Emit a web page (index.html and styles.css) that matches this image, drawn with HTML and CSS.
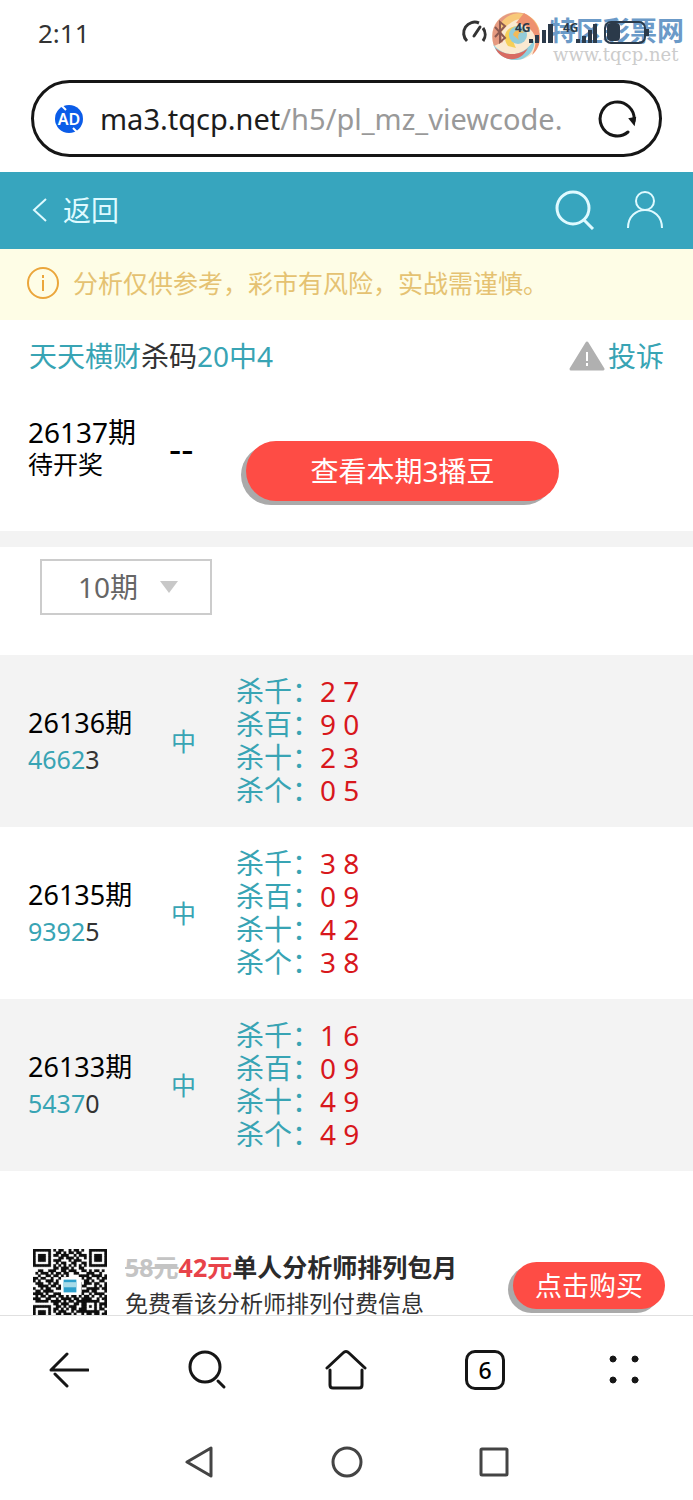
FILE: index.html
```html
<!DOCTYPE html>
<html lang="zh-CN">
<head>
	<meta charset="utf-8">
	<meta name="viewport" content="width=device-width, initial-scale=1">
	<title>天天横财杀码</title>
	<link rel="stylesheet" href="styles.css">
</head>
<body>

<div class="status">
	<span>2:11</span>
	<svg class="status-icons" width="192" height="30" viewBox="0 0 192 30">
		<g fill="none" stroke="#333" stroke-width="3">
			<path d="M6 23 A11 11 0 0 1 18 5 M22 10 A11 11 0 0 1 22 23"/>
			<path d="M13 18 L19 9" stroke-linecap="round"/>
			<path d="M34 9 L44 20 L39 24 V4 L44 8 L34 19" stroke="#8d5a50" stroke-width="2"/>
		</g>
		<g fill="#2b3a4a">
			<path d="M68 21h4v4h-4z M74 17h4v8h-4z M81 12h4v13h-4z M87 6h5v19h-5z"/>
			<path d="M115 21h4v4h-4z M121 18h4v7h-4z M127 12h4v13h-4z M132 6h4v19h-4z"/>
			<text x="54" y="14">4G</text>
			<text x="102" y="14">4G</text>
			<rect x="146" y="5" width="13" height="18" rx="4"/>
			<rect x="185" y="11" width="3" height="7"/>
		</g>
		<rect x="144" y="4" width="40" height="21" rx="6" fill="none" stroke="#2b3a4a" stroke-width="2"/>
	</svg>
	<div class="watermark">
		<svg width="52" height="54" viewBox="0 0 52 54">
			<circle cx="26" cy="26" r="24" fill="#fae9d0"/>
			<path d="M4 36 C-4 12 18 -4 38 5 C20 2 8 14 13 32 Z" fill="#e59a80"/>
			<path d="M10 14 C22 -4 46 2 50 22 C40 4 24 4 10 24 Z" fill="#f8c979"/>
			<path d="M34 3 C52 12 55 34 42 45 C50 28 44 16 26 13 Z" fill="#ee9270"/>
			<path d="M3 34 C16 50 34 46 44 30 C46 42 34 51 24 50 C12 49 6 42 3 34 Z" fill="#8fd0df"/>
			<path d="M5 38 C18 48 32 44 38 38 C30 54 12 52 5 38 Z" fill="#d86b62"/>
			<path d="M18 36 C8 22 24 10 36 20 C24 18 20 28 26 38 Z" fill="#f6cf58"/>
			<circle cx="28" cy="25" r="9" fill="#93ccd9"/>
			<path d="M23 25 A6 6 0 0 1 34 23 C29 21 27 25 29 30 Z" fill="#f3ba59"/>
		</svg>
		<div>
			<b>特区彩票网</b>
			<small>www.tqcp.net</small>
		</div>
	</div>
</div>

<div class="address">
	<svg width="28" height="28" viewBox="0 0 28 28">
		<circle cx="14" cy="14" r="14" fill="#0b5ce8"/>
		<path d="M7 1 L11 5 M18 23 L22 27" stroke="#fff" stroke-width="2"/>
		<text x="14" y="20" text-anchor="middle">AD</text>
	</svg>
	<span class="url">ma3.tqcp.net<i>/h5/pl_mz_viewcode.</i></span>
	<button type="button" aria-label="刷新">
		<svg width="40" height="40" viewBox="0 0 40 40" fill="none" stroke="#161616" stroke-width="2">
			<path d="M31 33 A17 17 0 1 1 37 22" stroke-width="3" stroke-linecap="round"/>
			<path d="M33 20 L37 25 L38 19 Z" fill="#161616"/>
		</svg>
	</button>
</div>

<main>
	<header class="topbar">
		<a class="back" href="#">
			<svg width="16" height="26" viewBox="0 0 16 26" fill="none" stroke="#dffaff" stroke-width="2">
				<path d="M14 2 L2 13 L14 24"/>
			</svg>
			返回
		</a>
		<a href="#" aria-label="搜索">
			<svg width="40" height="40" viewBox="0 0 40 40" fill="none" stroke="#dffaff" stroke-width="3">
				<circle cx="18" cy="18" r="16"/>
				<path d="M29 30 L38 39"/>
			</svg>
		</a>
		<a href="#" aria-label="我的">
			<svg width="38" height="40" viewBox="0 0 38 40" fill="none" stroke="#dffaff" stroke-width="2">
				<circle cx="19" cy="11" r="9"/>
				<path d="M2 38 C2 14 36 14 36 38"/>
			</svg>
		</a>
	</header>

	<div class="notice">
		<svg width="32" height="32" viewBox="0 0 32 32" fill="none" stroke="#eba63c" stroke-width="2">
			<circle cx="16" cy="16" r="15"/>
			<path d="M16 13 V24 M16 8 V11"/>
		</svg>
		分析仅供参考，彩市有风险，实战需谨慎。
	</div>

	<div class="title">
		<h1><em>天天横财</em>杀码<em>20中4</em></h1>
		<a href="#">
			<svg width="36" height="30" viewBox="0 0 36 30">
				<path d="M18 2 L34 28 H2 Z" fill="#b0b0b0" stroke="#b0b0b0" stroke-width="3" stroke-linejoin="round"/>
				<path d="M18 11 V20 M18 22 V25" stroke="#fff" stroke-width="2"/>
			</svg>
			投诉
		</a>
	</div>

	<section class="current">
		<div class="period">26137期<small>待开奖</small></div>
		<span class="dash">--</span>
		<button type="button" class="pill">查看本期3播豆</button>
	</section>

	<div class="filter">
		<div class="select">
			<select aria-label="期数">
				<option>10期</option>
				<option>20期</option>
				<option>30期</option>
			</select>
			<svg width="18" height="12" viewBox="0 0 18 12"><path d="M0 0 H18 L9 12 Z" fill="#c8c8c8"/></svg>
		</div>
	</div>

	<table class="list">
		<tr>
			<td class="no">26136期<span><em>4662</em>3</span></td>
			<td class="hit">中</td>
			<td><ul>
				<li>杀千：<b>2 7</b></li>
				<li>杀百：<b>9 0</b></li>
				<li>杀十：<b>2 3</b></li>
				<li>杀个：<b>0 5</b></li>
			</ul></td>
		</tr>
		<tr>
			<td class="no">26135期<span><em>9392</em>5</span></td>
			<td class="hit">中</td>
			<td><ul>
				<li>杀千：<b>3 8</b></li>
				<li>杀百：<b>0 9</b></li>
				<li>杀十：<b>4 2</b></li>
				<li>杀个：<b>3 8</b></li>
			</ul></td>
		</tr>
		<tr>
			<td class="no">26133期<span><em>5437</em>0</span></td>
			<td class="hit">中</td>
			<td><ul>
				<li>杀千：<b>1 6</b></li>
				<li>杀百：<b>0 9</b></li>
				<li>杀十：<b>4 9</b></li>
				<li>杀个：<b>4 9</b></li>
			</ul></td>
		</tr>
	</table>

	<section class="promo">
		<svg id="qr" width="74" height="74" viewBox="0 0 29 29"></svg>
		<div class="promo-text">
			<h2><del>58元</del><ins>42元</ins>单人分析师排列包月</h2>
			<p>免费看该分析师排列付费信息</p>
		</div>
		<button type="button" class="pill buy">点击购买</button>
	</section>
</main>

<footer>
	<nav class="tools">
		<button type="button" aria-label="后退">
			<svg width="40" height="40" viewBox="0 0 40 40">
				<path d="M39 20 H2 L18 4 M6 24 L18 36"/>
			</svg>
		</button>
		<button type="button" aria-label="搜索">
			<svg width="40" height="40" viewBox="0 0 40 40">
				<circle cx="17" cy="17" r="15"/>
				<path d="M30 31 L36 37"/>
			</svg>
		</button>
		<button type="button" aria-label="主页">
			<svg width="42" height="40" viewBox="0 0 42 40">
				<path d="M2 18 L18 3 Q21 0 24 3 L40 18 M5 20 V35 Q5 38 8 38 H34 Q37 38 37 35 V20"/>
			</svg>
		</button>
		<button type="button" aria-label="标签页"><span class="tabs">6</span></button>
		<button type="button" aria-label="菜单">
			<svg class="dots" width="32" height="30" viewBox="0 0 32 30">
				<circle cx="5" cy="4" r="3"/><circle cx="27" cy="4" r="3"/>
				<circle cx="5" cy="25" r="3"/><circle cx="27" cy="25" r="3"/>
			</svg>
		</button>
	</nav>
	<nav class="system">
		<button type="button" aria-label="返回">
			<svg width="32" height="32" viewBox="0 0 32 32"><path d="M27 2 V30 L3 16 Z"/></svg>
		</button>
		<button type="button" aria-label="桌面">
			<svg width="32" height="32" viewBox="0 0 32 32"><circle cx="16" cy="16" r="14"/></svg>
		</button>
		<button type="button" aria-label="多任务">
			<svg width="32" height="32" viewBox="0 0 32 32"><rect x="3" y="3" width="26" height="26" rx="1"/></svg>
		</button>
	</nav>
</footer>

<script src="qr.js"></script>
</body>
</html>
```
FILE: styles.css
```css
* {
	box-sizing: border-box;
}

body {
	display: flex;
	flex-direction: column;
	height: 100vh;
	margin: 0;
	background: #fff;
	color: #000;
	font: 28px/32px "Noto Sans", "Noto Sans CJK SC", sans-serif;
}

a {
	color: #38a4b4;
	text-decoration: none;
}

button {
	padding: 0;
	border: 0;
	background: none;
	color: inherit;
	font: inherit;
}

svg {
	display: block;
	flex: none;
}

em, i {
	font-style: normal;
}

em {
	color: #38a4b4;
}

/* phone status bar */
.status {
	position: relative;
	display: flex;
	flex: none;
	align-items: center;
	justify-content: space-between;
	height: 68px;
	padding: 0 40px 2px 38px;
	color: #333;
	font-size: 26px;
}

.status-icons {
	position: relative;
	z-index: 1;
}

.status-icons text {
	font-size: 12px;
	font-weight: bold;
}

.watermark {
	position: absolute;
	top: 10px;
	right: 9px;
	display: flex;
	gap: 7px;
}

.watermark b {
	display: block;
	margin-top: 4px;
	color: #6b9ac8;
	font-size: 27px;
	line-height: 34px;
}

.watermark small {
	display: block;
	padding-left: 4px;
	color: #ccc;
	font: 18px/14px "DejaVu Serif", serif;
}

.address {
	display: flex;
	flex: none;
	align-items: center;
	height: 77px;
	margin: 12px 31px 15px;
	padding: 0 22px 0 21px;
	border: 3px solid #161616;
	border-radius: 39px;
}

.address text {
	fill: #fff;
	font-size: 16px;
	font-weight: 600;
}

.url {
	flex: 1;
	margin-left: 17px;
	overflow: hidden;
	font-size: 29px;
	line-height: 40px;
	white-space: nowrap;
	color: #1c1c1c;
}

.url i {
	color: #999;
}

main {
	flex: 1;
	min-height: 0;
	overflow: hidden;
}

.topbar {
	display: flex;
	align-items: center;
	gap: 31px;
	height: 77px;
	padding: 0 29px 2px 32px;
	background: #37a5be;
}

.back {
	display: flex;
	flex: 1;
	align-items: center;
	gap: 15px;
	color: #dffaff;
}

.notice {
	display: flex;
	align-items: center;
	gap: 14px;
	height: 71px;
	padding: 0 27px 4px;
	background: #fefde6;
	color: #e5c272;
	font-size: 25px;
}

.title {
	display: flex;
	align-items: center;
	justify-content: space-between;
	height: 72px;
	padding: 0 29px;
}

.title h1 {
	margin: 0;
	font-size: 28px;
	font-weight: normal;
	color: #333;
}

.title a {
	display: flex;
	align-items: center;
	gap: 3px;
}

.current {
	display: flex;
	align-items: flex-start;
	padding: 24px 28px 30px;
	border-bottom: 16px solid #f3f3f3;
}

.period {
	width: 141px;
}

.period small {
	display: block;
	font-size: 25px;
}

.dash {
	width: 77px;
	margin-top: 16px;
	font-size: 38px;
}

.pill {
	width: 313px;
	height: 60px;
	margin-top: 25px;
	border-radius: 30px;
	background: #fe4c45;
	box-shadow: -5px 4px 0 #aaa;
	color: #fff;
}

.filter {
	padding: 12px 40px 40px;
}

.select {
	position: relative;
	width: 172px;
}

.select select {
	width: 100%;
	height: 56px;
	padding: 0 36px;
	border: 2px solid #ccc;
	border-radius: 0;
	background: #fff;
	color: #666;
	font: inherit;
	appearance: none;
}

.select svg {
	position: absolute;
	top: 22px;
	right: 34px;
	pointer-events: none;
}

.list {
	width: 100%;
	border-collapse: collapse;
}

.list tr:nth-child(odd) {
	background: #f3f3f3;
}

.list td {
	padding: 20px 0;
}

.list .no {
	width: 171px;
	padding-left: 28px;
	font-size: 27px;
	line-height: 37px;
}

.no span {
	display: block;
	color: #333;
	font-size: 25px;
}

.list .hit {
	width: 65px;
	color: #38a4b4;
	font-size: 25px;
}

.list ul {
	margin: 0;
	padding: 0;
	list-style: none;
	color: #38a4b4;
	line-height: 33px;
}

.list b {
	color: #d8171c;
	font-weight: normal;
}

.promo {
	display: flex;
	align-items: flex-start;
	margin-top: 78px;
	padding: 0 28px 30px 33px;
}

.promo-text {
	flex: 1;
	margin-left: 18px;
}

.promo h2 {
	margin: 0;
	font-size: 25px;
	line-height: 36px;
	color: #2b2b2b;
}

.promo del {
	color: #c4c4c4;
}

.promo ins {
	color: #e8434a;
	text-decoration: none;
}

.promo p {
	margin: 0;
	color: #333;
	font-size: 23px;
	line-height: 36px;
}

.buy {
	width: 152px;
	height: 47px;
	margin-top: 13px;
	font-size: 27px;
}

footer {
	flex: none;
	border-top: 1px solid #e0e0e0;
}

footer svg {
	fill: none;
	stroke: #161616;
	stroke-width: 3px;
	stroke-linecap: round;
	stroke-linejoin: round;
}

.tools {
	display: grid;
	grid-template-columns: repeat(5, 1fr);
	height: 108px;
}

.tools button, .system button {
	display: flex;
	align-items: center;
	justify-content: center;
}

.tabs {
	width: 40px;
	height: 40px;
	border: 3px solid #161616;
	border-radius: 10px;
	font-size: 23px;
	font-weight: 500;
	line-height: 34px;
}

.tools .dots {
	fill: #161616;
	stroke-width: 1px;
}

.system {
	display: flex;
	justify-content: center;
	height: 76px;
}

.system button {
	width: 147px;
}

.system svg {
	stroke: #444;
}
```
FILE: qr.js
```js
// 1 = dark module
var rows = [
	"11111110101100101101001111111",
	"10000010011010110110001000001",
	"10111010110111001011101011101",
	"10111010001101110100101011101",
	"10111010111000101110001011101",
	"10000010010110011001101000001",
	"11111110101010101010101111111",
	"00000000110111010011000000000",
	"00110011100110111001101011010",
	"01011101011011001100011100100",
	"00100110110101000011110111101",
	"11011001001110000001011001011",
	"10100111010000000000110100110",
	"01110010110000000010111011001",
	"00111101101000000001100010101",
	"10010110011000000010011111011",
	"01101111000000000001110110001",
	"11110100111000000011001011110",
	"01011011101101011010110100101",
	"11100110010111101101111001011",
	"01111101111010110111111111001",
	"00000000110111001101100010111",
	"11111110011010111001101010101",
	"10000010110101011011100010110",
	"10111010101110010111111111001",
	"10111010011011101001011011011",
	"10111010110100110110101100101",
	"10000010101101011001110011010",
	"11111110011010110110101011101"
];

var d = "";
for (var y = 0; y < rows.length; y++) {
	for (var x = 0; x < rows[y].length; x++) {
		if (rows[y][x] == "1") d += "M" + x + " " + y + "h1v1h-1z";
	}
}

document.getElementById("qr").innerHTML =
	"<path d='" + d + "' fill='#111' stroke='#111' stroke-width='.1'/>" +
	"<rect x='11' y='11' width='8' height='7' fill='#fff'/>" +
	"<rect x='12' y='12' width='5' height='5' fill='#2da0cc'/>" +
	"<rect x='12' y='13' width='5' height='2' fill='#a8dbe8'/>";
```
